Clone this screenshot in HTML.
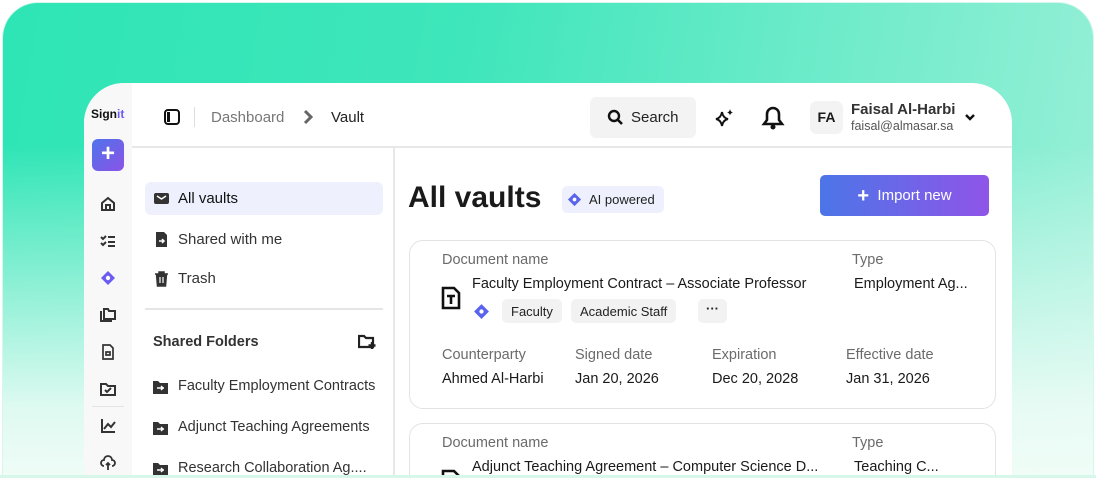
<!DOCTYPE html>
<html style="width:1096px;height:478px;overflow:hidden"><head><style>
*{margin:0;padding:0;box-sizing:border-box}
body{width:1096px;height:478px;overflow:hidden;background:#fff;font-family:"Liberation Sans",sans-serif;color:#1a1a1a;position:relative}
.frame{position:absolute;left:2px;top:2px;width:1092px;height:476px;border-radius:36px 36px 0 0;border:1px solid #d8f7ec;border-bottom:none;
background:linear-gradient(180deg,rgba(255,255,255,0) 0%,rgba(255,255,255,0) 30%,rgba(240,252,247,.9) 85%,#f0fcf7 100%),linear-gradient(100deg,#2ee5b5 0%,#3fe6bb 40%,#9af0d8 100%);}
.win{position:absolute;left:84px;top:83px;width:928px;height:395px;background:#fff;border-radius:40px 40px 0 0;overflow:hidden}
.rail{position:absolute;left:0;top:0;width:48px;height:100%;background:#f8f8f8}
.hdr{position:absolute;left:48px;top:0;right:0;height:65px;border-bottom:2px solid #e8e8e8}
.side{position:absolute;left:48px;top:65px;width:263px;bottom:0;border-right:2px solid #e8e8e8}
.abs{position:absolute}
.t{position:absolute;white-space:nowrap}
.nav{position:absolute;left:13px;width:238px;height:33px;border-radius:6px;font-size:15px;color:#333}
.nav .t{left:33px;top:8px}
.nav svg{position:absolute;left:8px;top:8px}
.fold{position:absolute;left:20px;font-size:14.5px;color:#333}
.card{position:absolute;left:325px;width:587px;border:1.5px solid #e3e3e3;border-radius:14px;background:#fff}
.lbl{font-size:14.5px;color:#6b6b6b}
.val{font-size:14.5px;color:#1a1a1a}
.chip{position:absolute;top:58px;height:24px;background:#f2f2f2;border-radius:5px;font-size:13px;padding:5px 9px;color:#222}
</style></head><body>
<div class="frame"></div>
<div class="win">
 <div class="rail">
  <div class="t" style="left:7px;top:24px;font-size:12px;font-weight:bold;color:#111">Sign<span style="color:#6a5cf0">it</span></div>
  <div class="abs" style="left:8px;top:56px;width:32px;height:32px;border-radius:6px;background:linear-gradient(135deg,#4f73ea,#8a53e8);color:#fff;font-size:24px;line-height:30px;text-align:center;font-weight:bold">+</div>
  <svg class="abs" style="left:16px;top:113px" width="16" height="16" viewBox="0 0 16 16"><path d="M2 7L8 2l6 5v7H2z M6 14V9h4v5" fill="none" stroke="#333" stroke-width="2"/></svg>
  <svg class="abs" style="left:16px;top:150px" width="16" height="16" viewBox="0 0 16 16"><path d="M1 4l2 2 3-3M1 10l2 2 3-3M8 4h7M8 9h7M8 13h7" fill="none" stroke="#333" stroke-width="2"/></svg>
  <svg class="abs" style="left:16px;top:187px" width="16" height="16" viewBox="0 0 16 16"><path d="M8 1l7 7-7 7-7-7z" fill="#6a5cf0"/><circle cx="8" cy="8" r="2.2" fill="#fff"/></svg>
  <svg class="abs" style="left:16px;top:224px" width="16" height="16" viewBox="0 0 16 16"><path d="M1 4v10h11M4 2h4l1 2h6v8H4z" fill="none" stroke="#333" stroke-width="2"/></svg>
  <svg class="abs" style="left:16px;top:261px" width="16" height="16" viewBox="0 0 16 16"><path d="M3 1h7l3 3v11H3z M6 8h4v3H6z" fill="none" stroke="#333" stroke-width="1.7"/></svg>
  <svg class="abs" style="left:16px;top:298px" width="16" height="16" viewBox="0 0 16 16"><path d="M1 3h5l2 2h7v9H1z M5 9l2 2 4-4" fill="none" stroke="#333" stroke-width="2"/></svg>
  <div class="abs" style="left:8px;top:323px;width:32px;height:1px;background:#e3e3e3"></div>
  <svg class="abs" style="left:16px;top:335px" width="16" height="16" viewBox="0 0 16 16"><path d="M2 1v13h13M4 11l4-5 3 3 4-5" fill="none" stroke="#333" stroke-width="2"/></svg>
  <svg class="abs" style="left:16px;top:372px" width="16" height="16" viewBox="0 0 16 16"><path d="M4 11a3 3 0 010-6 4 4 0 018 0 3 3 0 010 6M8 8v7M6 10l2-2 2 2" fill="none" stroke="#333" stroke-width="1.8"/></svg>
 </div>
 <div class="hdr">
  <svg class="abs" style="left:32px;top:26px" width="16" height="16" viewBox="0 0 16 16"><rect x="1" y="1" width="14" height="14" rx="3" fill="none" stroke="#111" stroke-width="2"/><rect x="3" y="3" width="3" height="10" fill="#111"/></svg>
  <div class="abs" style="left:62px;top:24px;width:1px;height:20px;background:#ddd"></div>
  <div class="t" style="left:79px;top:26px;font-size:15px;color:#777">Dashboard</div>
  <svg class="abs" style="left:170px;top:26px" width="12" height="16" viewBox="0 0 12 16"><path d="M3 2l6 6-6 6" fill="none" stroke="#666" stroke-width="3"/></svg>
  <div class="t" style="left:199px;top:26px;font-size:15px;color:#222">Vault</div>
  <div class="abs" style="left:458px;top:14px;width:106px;height:41px;border-radius:6px;background:#f3f3f3"></div>
  <svg class="abs" style="left:475px;top:26px" width="17" height="17" viewBox="0 0 17 17"><circle cx="7" cy="7" r="5" fill="none" stroke="#111" stroke-width="2.4"/><path d="M11 11l4 4" stroke="#111" stroke-width="2.6"/></svg>
  <div class="t" style="left:499px;top:26px;font-size:15px;color:#222">Search</div>
  <svg class="abs" style="left:582px;top:24px" width="22" height="22" viewBox="0 0 22 22"><path d="M8 5q1 6 6 7-5 1-6 7-1-6-6-7 5-1 6-7z" fill="none" stroke="#111" stroke-width="2"/><path d="M16 2q.5 3 3 3.5-2.5.5-3 3-.5-2.5-3-3 2.5-.5 3-3.5z" fill="#111"/></svg>
  <svg class="abs" style="left:629px;top:22px" width="24" height="26" viewBox="0 0 24 26"><path d="M12 3a6 6 0 00-6 6v6l-3 4h18l-3-4V9a6 6 0 00-6-6z" fill="none" stroke="#111" stroke-width="2.6"/><circle cx="12" cy="22" r="2.5" fill="#111"/></svg>
  <div class="abs" style="left:678px;top:18px;width:33px;height:33px;border-radius:7px;background:#f3f3f3;font-size:14px;font-weight:bold;line-height:33px;text-align:center">FA</div>
  <div class="t" style="left:719px;top:18px;font-size:15px;font-weight:bold;color:#333">Faisal Al-Harbi</div>
  <div class="t" style="left:719px;top:36px;font-size:12.5px;color:#555">faisal@almasar.sa</div>
  <svg class="abs" style="left:832px;top:29px" width="12" height="10" viewBox="0 0 12 10"><path d="M2 3l4 4 4-4" fill="none" stroke="#111" stroke-width="2.4"/></svg>
 </div>
 <div class="side">
  <div class="nav" style="top:34px;background:#eef1fd"><svg width="17" height="17" viewBox="0 0 17 17"><rect x="1" y="3" width="15" height="11" rx="2" fill="#333"/><path d="M4 6l4.5 3L13 6" stroke="#fff" stroke-width="1.5" fill="none"/></svg><div class="t" style="color:#111">All vaults</div></div>
  <div class="nav" style="top:75px"><svg width="17" height="17" viewBox="0 0 17 17"><path d="M3 1h8l3 3v12H3z" fill="#333"/><path d="M6 10h5M9 8l2 2-2 2" stroke="#fff" stroke-width="1.5" fill="none"/></svg><div class="t">Shared with me</div></div>
  <div class="nav" style="top:114px"><svg width="17" height="17" viewBox="0 0 17 17"><path d="M2 4h13M6 4V2h5v2M3.5 4l1 12h8l1-12" fill="#333" stroke="#333" stroke-width="1.5"/><path d="M7 7v6M10 7v6" stroke="#fff" stroke-width="1.2"/></svg><div class="t">Trash</div></div>
  <div class="abs" style="left:13px;top:160px;width:238px;height:2px;background:#e6e6e6"></div>
  <div class="t" style="left:21px;top:186px;font-size:14.5px;font-weight:bold;color:#333">Shared Folders</div>
  <svg class="abs" style="left:226px;top:186px" width="18" height="16" viewBox="0 0 18 16"><path d="M1 2h5l2 2h7v9H1z" fill="none" stroke="#222" stroke-width="2.2"/><path d="M14 8v7M10.5 11.5h7" stroke="#222" stroke-width="2.4"/></svg>
  <div class="fold" style="top:230px"><svg class="abs" style="left:0;top:2px" width="17" height="15" viewBox="0 0 17 15"><path d="M1 1h5l2 2h8v11H1z" fill="#333"/><path d="M5 8h7M9 6l2 2-2 2" stroke="#fff" stroke-width="1.4" fill="none"/></svg><span class="t" style="left:26px;top:0">Faculty Employment Contracts</span></div>
  <div class="fold" style="top:271px"><svg class="abs" style="left:0;top:2px" width="17" height="15" viewBox="0 0 17 15"><path d="M1 1h5l2 2h8v11H1z" fill="#333"/><path d="M5 8h7M9 6l2 2-2 2" stroke="#fff" stroke-width="1.4" fill="none"/></svg><span class="t" style="left:26px;top:0">Adjunct Teaching Agreements</span></div>
  <div class="fold" style="top:312px"><svg class="abs" style="left:0;top:2px" width="17" height="15" viewBox="0 0 17 15"><path d="M1 1h5l2 2h8v11H1z" fill="#333"/><path d="M5 8h7M9 6l2 2-2 2" stroke="#fff" stroke-width="1.4" fill="none"/></svg><span class="t" style="left:26px;top:0">Research Collaboration Ag....</span></div>
 </div>
 <div class="t" style="left:324px;top:98px;font-size:30px;font-weight:bold;color:#1a1a1a">All vaults</div>
 <div class="abs" style="left:478px;top:103px;width:102px;height:27px;border-radius:5px;background:#eef1fd"></div>
 <svg class="abs" style="left:483px;top:109px" width="15" height="15" viewBox="0 0 16 16"><path d="M8 1l7 7-7 7-7-7z" fill="#5a63ee"/><circle cx="8" cy="8" r="2" fill="#fff"/></svg>
 <div class="t" style="left:505px;top:109px;font-size:13px;color:#222">AI powered</div>
 <div class="abs" style="left:736px;top:92px;width:169px;height:41px;border-radius:5px;background:linear-gradient(90deg,#4c75e8,#8f55e8);color:#fff;font-size:15px;line-height:41px;text-align:center"><b style="font-size:20px;vertical-align:-2px">+</b>&nbsp;&nbsp;Import new</div>

 <div class="card" style="top:157px;height:169px">
  <div class="t lbl" style="left:32px;top:11px">Document name</div>
  <div class="t lbl" style="left:442px;top:11px">Type</div>
  <svg class="abs" style="left:31px;top:45px" width="20" height="24" viewBox="0 0 20 24"><path d="M2 2h11l5 5v15H2z" fill="none" stroke="#111" stroke-width="2.6"/><path d="M6 10h8M10 10v8" stroke="#111" stroke-width="2.6"/></svg>
  <div class="t val" style="left:62px;top:35px">Faculty Employment Contract – Associate Professor</div>
  <div class="t val" style="left:444px;top:35px">Employment Ag...</div>
  <svg class="abs" style="left:63px;top:62px" width="17" height="17" viewBox="0 0 16 16"><path d="M8 1l7 7-7 7-7-7z" fill="#5a63ee"/><circle cx="8" cy="8" r="2" fill="#fff"/></svg>
  <div class="chip" style="left:92px">Faculty</div>
  <div class="chip" style="left:161px">Academic Staff</div>
  <div class="chip" style="left:288px;width:29px;padding:0;text-align:center;line-height:20px;font-size:13px;font-weight:bold">···</div>
  <div class="t lbl" style="left:32px;top:106px">Counterparty</div>
  <div class="t lbl" style="left:165px;top:106px">Signed date</div>
  <div class="t lbl" style="left:302px;top:106px">Expiration</div>
  <div class="t lbl" style="left:436px;top:106px">Effective date</div>
  <div class="t val" style="left:32px;top:130px">Ahmed Al-Harbi</div>
  <div class="t val" style="left:165px;top:130px">Jan 20, 2026</div>
  <div class="t val" style="left:302px;top:130px">Dec 20, 2028</div>
  <div class="t val" style="left:436px;top:130px">Jan 31, 2026</div>
 </div>
 <div class="card" style="top:340px;height:80px">
  <div class="t lbl" style="left:32px;top:11px">Document name</div>
  <div class="t lbl" style="left:442px;top:11px">Type</div>
  <svg class="abs" style="left:31px;top:45px" width="20" height="24" viewBox="0 0 20 24"><path d="M2 2h11l5 5v15H2z" fill="none" stroke="#111" stroke-width="2.6"/></svg>
  <div class="t val" style="left:62px;top:35px">Adjunct Teaching Agreement – Computer Science D...</div>
  <div class="t val" style="left:444px;top:35px">Teaching C...</div>
 </div>
</div>
<div class="abs" style="left:0;top:475px;width:1096px;height:3px;background:#d6f7ea"></div>
</body></html>
